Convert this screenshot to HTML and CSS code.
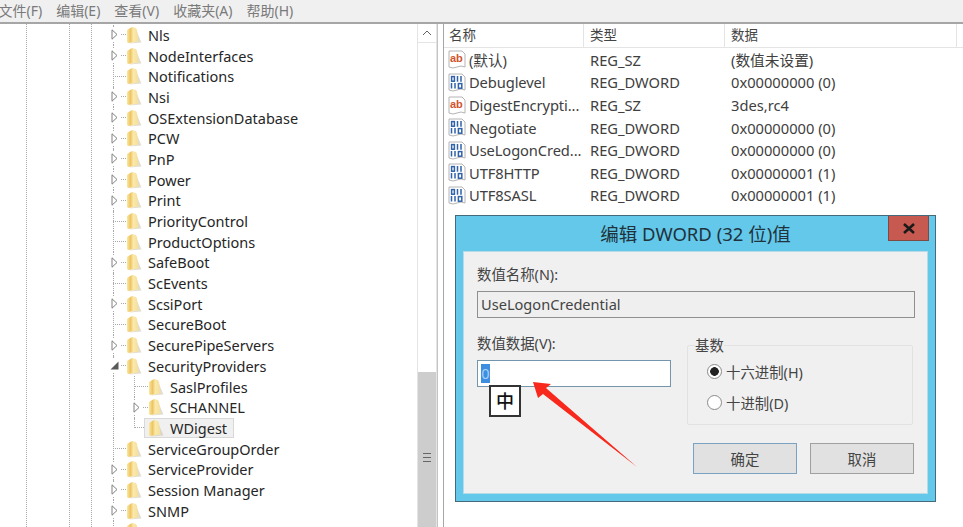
FILE: index.html
```html
<!DOCTYPE html>
<html lang="zh-CN">
<head>
    <meta charset="UTF-8">
    <title>注册表编辑器</title>
    <link rel="stylesheet" href="styles.css">
</head>
<body>
<svg class="defs" width="0" height="0">
    <defs>
        <linearGradient id="fold" x1="0" y1="0" x2="1" y2="0">
            <stop offset="0" stop-color="#fbe8a0"/>
            <stop offset="0.3" stop-color="#eec463"/>
            <stop offset="0.55" stop-color="#fae9ab"/>
            <stop offset="1" stop-color="#f5de9a"/>
        </linearGradient>
        <symbol id="folder" viewBox="0 0 16 18">
            <path d="M11 6 L15.5 16.5 L3 17.5 L11 15 Z" fill="#c9c2ac" opacity=".55"/>
            <path d="M1 4 L6 1 L10 2 L11 4 L12.5 15.5 L2 17 L1 16 Z" fill="url(#fold)"/>
        </symbol>
        <symbol id="closed" viewBox="0 0 7 11">
            <path d="M1 0.8 L6 5.5 L1 10.2 Z" fill="#fff" stroke="#808080"/>
        </symbol>
        <symbol id="opened" viewBox="0 0 9 9">
            <path d="M8.5 0.5 V8.5 H0.5 Z" fill="#5a5a5a"/>
        </symbol>
        <symbol id="page" viewBox="0 0 18 19">
            <path d="M1 1 H14 L17 4 V17 Q13 15 9 17 T1 17 Z" fill="#fff" stroke="#b4b4b4"/>
        </symbol>
        <symbol id="sz" viewBox="0 0 18 19">
            <use href="#page" width="18" height="19"/>
            <text x="2" y="12" class="ab-text">ab</text>
        </symbol>
        <symbol id="bin" viewBox="0 0 18 19">
            <use href="#page" width="18" height="19"/>
            <g fill="none" stroke="#2f62a8" stroke-width="1.5">
                <rect x="3.6" y="3.6" width="2.8" height="4.6"/>
                <path d="M9.5 3 V8.8 M13 3 V8.8 M3.5 10 V15.5 M7 10 V15.5"/>
                <rect x="10.4" y="10.6" width="3.4" height="4.6"/>
            </g>
        </symbol>
    </defs>
</svg>

<div class="menubar">
    <span>文件(F)</span>
    <span>编辑(E)</span>
    <span>查看(V)</span>
    <span>收藏夹(A)</span>
    <span>帮助(H)</span>
</div>

<div class="panes">
    <div class="treepane">
        <ul class="tree">
            <li class="row"><span class="twist"><svg><use href="#closed"/></svg></span><svg class="folder"><use href="#folder"/></svg><span class="name">Nls</span></li>
            <li class="row"><span class="twist"><svg><use href="#closed"/></svg></span><svg class="folder"><use href="#folder"/></svg><span class="name">NodeInterfaces</span></li>
            <li class="row"><span class="twist"></span><svg class="folder"><use href="#folder"/></svg><span class="name">Notifications</span></li>
            <li class="row"><span class="twist"><svg><use href="#closed"/></svg></span><svg class="folder"><use href="#folder"/></svg><span class="name">Nsi</span></li>
            <li class="row"><span class="twist"><svg><use href="#closed"/></svg></span><svg class="folder"><use href="#folder"/></svg><span class="name">OSExtensionDatabase</span></li>
            <li class="row"><span class="twist"><svg><use href="#closed"/></svg></span><svg class="folder"><use href="#folder"/></svg><span class="name">PCW</span></li>
            <li class="row"><span class="twist"><svg><use href="#closed"/></svg></span><svg class="folder"><use href="#folder"/></svg><span class="name">PnP</span></li>
            <li class="row"><span class="twist"><svg><use href="#closed"/></svg></span><svg class="folder"><use href="#folder"/></svg><span class="name">Power</span></li>
            <li class="row"><span class="twist"><svg><use href="#closed"/></svg></span><svg class="folder"><use href="#folder"/></svg><span class="name">Print</span></li>
            <li class="row"><span class="twist"></span><svg class="folder"><use href="#folder"/></svg><span class="name">PriorityControl</span></li>
            <li class="row"><span class="twist"></span><svg class="folder"><use href="#folder"/></svg><span class="name">ProductOptions</span></li>
            <li class="row"><span class="twist"><svg><use href="#closed"/></svg></span><svg class="folder"><use href="#folder"/></svg><span class="name">SafeBoot</span></li>
            <li class="row"><span class="twist"></span><svg class="folder"><use href="#folder"/></svg><span class="name">ScEvents</span></li>
            <li class="row"><span class="twist"><svg><use href="#closed"/></svg></span><svg class="folder"><use href="#folder"/></svg><span class="name">ScsiPort</span></li>
            <li class="row"><span class="twist"></span><svg class="folder"><use href="#folder"/></svg><span class="name">SecureBoot</span></li>
            <li class="row"><span class="twist"><svg><use href="#closed"/></svg></span><svg class="folder"><use href="#folder"/></svg><span class="name">SecurePipeServers</span></li>
            <li class="row"><span class="twist"><svg class="open"><use href="#opened"/></svg></span><svg class="folder"><use href="#folder"/></svg><span class="name">SecurityProviders</span></li>
            <li class="row sub"><span class="twist"></span><svg class="folder"><use href="#folder"/></svg><span class="name">SaslProfiles</span></li>
            <li class="row sub"><span class="twist"><svg><use href="#closed"/></svg></span><svg class="folder"><use href="#folder"/></svg><span class="name">SCHANNEL</span></li>
            <li class="row sub last"><span class="twist"></span><span class="picked"><svg class="folder"><use href="#folder"/></svg><span class="name">WDigest</span></span></li>
            <li class="row"><span class="twist"></span><svg class="folder"><use href="#folder"/></svg><span class="name">ServiceGroupOrder</span></li>
            <li class="row"><span class="twist"><svg><use href="#closed"/></svg></span><svg class="folder"><use href="#folder"/></svg><span class="name">ServiceProvider</span></li>
            <li class="row"><span class="twist"><svg><use href="#closed"/></svg></span><svg class="folder"><use href="#folder"/></svg><span class="name">Session Manager</span></li>
            <li class="row"><span class="twist"><svg><use href="#closed"/></svg></span><svg class="folder"><use href="#folder"/></svg><span class="name">SNMP</span></li>
            <li class="row"><span class="twist"></span><svg class="folder"><use href="#folder"/></svg></li>
        </ul>
        <div class="scrollbar">
            <div class="sb-up"><svg width="10" height="6" viewBox="0 0 10 6"><path d="M1 5 L5 1 L9 5" fill="none" stroke="#606060"/></svg></div>
            <div class="sb-track"></div>
            <div class="sb-thumb"><span class="grip"></span></div>
        </div>
    </div>

    <div class="listpane">
        <div class="cols head">
            <span>名称</span>
            <span>类型</span>
            <span>数据</span>
        </div>
        <div class="cols item"><span class="vname"><svg class="vicon"><use href="#sz"/></svg>(默认)</span><span>REG_SZ</span><span>(数值未设置)</span></div>
        <div class="cols item"><span class="vname"><svg class="vicon"><use href="#bin"/></svg>Debuglevel</span><span>REG_DWORD</span><span>0x00000000 (0)</span></div>
        <div class="cols item"><span class="vname"><svg class="vicon"><use href="#sz"/></svg>DigestEncrypti...</span><span>REG_SZ</span><span>3des,rc4</span></div>
        <div class="cols item"><span class="vname"><svg class="vicon"><use href="#bin"/></svg>Negotiate</span><span>REG_DWORD</span><span>0x00000000 (0)</span></div>
        <div class="cols item"><span class="vname"><svg class="vicon"><use href="#bin"/></svg>UseLogonCred...</span><span>REG_DWORD</span><span>0x00000000 (0)</span></div>
        <div class="cols item"><span class="vname"><svg class="vicon"><use href="#bin"/></svg>UTF8HTTP</span><span>REG_DWORD</span><span>0x00000001 (1)</span></div>
        <div class="cols item"><span class="vname"><svg class="vicon"><use href="#bin"/></svg>UTF8SASL</span><span>REG_DWORD</span><span>0x00000001 (1)</span></div>
    </div>
</div>

<div class="dialog">
    <div class="titlebar">
        <span class="title">编辑 DWORD (32 位)值</span>
        <span class="close"><svg width="14" height="11" viewBox="0 0 14 11"><path d="M2 1 L12 10 M12 1 L2 10" stroke="#1a1a1a" stroke-width="2.6"/></svg></span>
    </div>
    <div class="client">
        <label class="lbl">数值名称(N):</label>
        <div class="field readonly">UseLogonCredential</div>
        <div class="lower">
            <div class="data">
                <label class="lbl">数值数据(V):</label>
                <div class="field edit"><span class="sel">0</span></div>
            </div>
            <fieldset class="base">
                <legend>基数</legend>
                <div class="radio"><span class="dot on"></span>十六进制(H)</div>
                <div class="radio"><span class="dot"></span>十进制(D)</div>
            </fieldset>
        </div>
        <div class="buttons">
            <button class="btn primary">确定</button>
            <button class="btn">取消</button>
        </div>
    </div>
</div>

<div class="ime">中</div>

<svg class="arrow" width="110" height="90" viewBox="0 0 110 90">
    <polygon points="2,2 20,4 15,8 106,87 12,14 7,18" fill="#f8281c"/>
</svg>
</body>
</html>
```

FILE: styles.css
```css
* {
    margin: 0;
    padding: 0;
    box-sizing: border-box;
}
body {
    position: relative;
    width: 963px;
    height: 527px;
    overflow: hidden;
    background-color: #fff;
    color: #2e2e2e;
    font-family: "Noto Sans", "Noto Sans CJK SC", sans-serif;
    font-size: 14px;
}
.defs {
    position: absolute;
}
.ab-text {
    font-family: "Liberation Sans", sans-serif;
    font-size: 11px;
    font-weight: bold;
    fill: #d2532e;
}

/* menu */
.menubar {
    display: flex;
    gap: 14px;
    height: 24px;
    padding-bottom: 3px;
    align-items: center;
    background-color: #f0f0f0;
    border-bottom: 2px solid #a6a6a6;
    color: #7a7a7a;
    font-size: 14px;
}
.menubar span:first-child {
    margin-left: -1.5px;
}

.panes {
    display: flex;
    height: 503px;
}

/* left tree */
.treepane {
    display: flex;
    width: 438px;
    flex: none;
    border-right: 1px solid #c4c4c4;
    overflow: hidden;
}
.tree {
    flex: 1;
    padding-top: 0.5px;
    list-style: none;
    background-image:
        repeating-linear-gradient(to bottom, #a8a8a8 0, #a8a8a8 1px, transparent 1px, transparent 2px),
        repeating-linear-gradient(to bottom, #a8a8a8 0, #a8a8a8 1px, transparent 1px, transparent 2px),
        repeating-linear-gradient(to bottom, #a8a8a8 0, #a8a8a8 1px, transparent 1px, transparent 2px);
    background-size: 1px 100%;
    background-position: 26px 0, 69px 0, 91px 0;
    background-repeat: no-repeat;
}
.row {
    position: relative;
    display: flex;
    align-items: center;
    height: 20.7px;
    padding-left: 108px;
    color: #262626;
    font-size: 14.5px;
    white-space: nowrap;
}
.row::before {
    content: "";
    position: absolute;
    left: 113px;
    top: 0;
    bottom: 0;
    border-left: 1px dotted #a8a8a8;
}
.twist {
    position: relative;
    z-index: 1;
    display: flex;
    align-items: center;
    width: 18px;
    height: 100%;
    flex: none;
    background: repeating-linear-gradient(to right, #a8a8a8 0, #a8a8a8 1px, transparent 1px, transparent 2px) 5px center / 13px 1px no-repeat;
}
.twist svg {
    width: 7px;
    height: 11px;
    margin-left: 3px;
    box-shadow: 0 0 0 2px #fff;
    background-color: #fff;
}
.twist svg.open {
    width: 9px;
    height: 9px;
    margin-left: 2px;
}
.folder {
    width: 16px;
    height: 18px;
    flex: none;
}
.name {
    margin-left: 6px;
}
.sub {
    padding-left: 130px;
}
.sub::after {
    content: "";
    position: absolute;
    left: 134px;
    top: 0;
    bottom: 0;
    border-left: 1px dotted #a8a8a8;
}
.sub.last::after {
    bottom: 50%;
}
.picked {
    position: relative;
    z-index: 1;
    display: flex;
    align-items: center;
    height: 20px;
    margin-left: -4px;
    padding: 0 6px 0 3px;
    background-color: #f0f0f0;
    border: 1px solid #d9d9d9;
}

/* scrollbar */
.scrollbar {
    position: relative;
    width: 20px;
    flex: none;
    border-left: 1px solid #e4e4e4;
    border-right: 1px solid #e4e4e4;
    display: flex;
    flex-direction: column;
}
.sb-up {
    display: flex;
    align-items: center;
    justify-content: center;
    height: 19px;
    border-bottom: 1px solid #e4e4e4;
}
.sb-track {
    height: 329px;
}
.sb-thumb {
    flex: 1;
    background-color: #cdcdcd;
}
.grip {
    display: block;
    width: 8px;
    height: 9px;
    margin: 81px auto 0;
    border-top: 1px solid #666;
    border-bottom: 1px solid #666;
    background: linear-gradient(#666, #666) center / 100% 1px no-repeat;
}

/* right list */
.listpane {
    flex: 1;
    margin-left: 5px;
    border-left: 1px solid #a6a6a6;
    overflow: hidden;
}
.cols {
    display: grid;
    grid-template-columns: 141px 141px 1fr;
    align-items: center;
    white-space: nowrap;
}
.head {
    height: 24px;
    margin-bottom: 0.6px;
    border-bottom: 1px solid #e4e4e4;
    padding-left: 5px;
    color: #444;
    font-size: 13.5px;
}
.head span {
    height: 100%;
    line-height: 22px;
    border-right: 1px solid #e4e4e4;
    margin-right: 6px;
}
.item {
    height: 22.6px;
    padding-left: 4px;
    color: #404040;
    font-size: 14.7px;
}
.item > span + span {
    margin-left: 1px;
}
.vname {
    display: flex;
    align-items: center;
    gap: 3px;
    letter-spacing: -0.1px;
}
.vicon {
    width: 18px;
    height: 19px;
    flex: none;
}

/* dialog */
.dialog {
    position: absolute;
    left: 455px;
    top: 215px;
    width: 481px;
    height: 287px;
    display: flex;
    flex-direction: column;
    padding: 0 7px 7px;
    background-color: #63c8ea;
    border: 1px solid #456a7c;
}
.titlebar {
    position: relative;
    height: 35px;
    flex: none;
    text-align: center;
    line-height: 35px;
    color: #20323c;
    font-size: 18.5px;
}
.close {
    position: absolute;
    top: 0;
    right: -1px;
    display: flex;
    align-items: center;
    justify-content: center;
    width: 41px;
    height: 25px;
    background-color: #c75a50;
    border: 1px solid #7d4a44;
    border-top: 0;
}
.client {
    flex: 1;
    display: flex;
    flex-direction: column;
    padding: 13px 13px 0;
    background-color: #f0f0f0;
    border: 1px solid #b6dbe8;
}
.lbl {
    display: block;
    height: 20px;
    line-height: 20px;
    color: #444;
    font-size: 14.4px;
}
.field {
    margin-top: 6px;
    height: 27px;
    line-height: 25px;
    padding-left: 3px;
    color: #444;
    font-size: 14.6px;
}
.readonly {
    width: 438px;
    background-color: #efefef;
    border: 1px solid #8f8f8f;
}
.lower {
    display: flex;
    gap: 16px;
    margin-top: 16px;
}
.data {
    width: 194px;
    flex: none;
}
.edit {
    background-color: #fff;
    border: 1px solid #7496ad;
}
.sel {
    display: inline-block;
    height: 19px;
    width: 9px;
    line-height: 19px;
    background-color: #3d8ee0;
    color: #a8d0f5;
    text-align: center;
}
.base {
    width: 226px;
    height: 86px;
    margin-top: 5px;
    padding: 4px 0 0 19px;
    border: 1px solid #e2e2e2;
    border-radius: 2px;
}
.base legend {
    margin-left: -12px;
    color: #444;
    font-size: 14.4px;
    line-height: 13px;
}
.radio {
    display: flex;
    align-items: center;
    gap: 4px;
    height: 31px;
    color: #444;
    font-size: 14.4px;
}
.dot {
    width: 15px;
    height: 15px;
    background-color: #fff;
    border: 1px solid #8a8a8a;
    border-radius: 50%;
}
.dot.on {
    background: radial-gradient(circle, #222 0, #222 4px, #fff 4.6px);
}
.buttons {
    display: flex;
    gap: 13px;
    margin-top: 18px;
    padding-left: 216px;
}
.btn {
    width: 104px;
    height: 31px;
    background-color: #e1e1e1;
    border: 1px solid #a0a0a0;
    color: #444;
    font-family: inherit;
    font-size: 14.4px;
}
.primary {
    border-color: #7ba2c0;
}

/* overlays */
.ime {
    position: absolute;
    left: 489px;
    top: 385px;
    width: 32px;
    height: 32px;
    border: 2px solid #333;
    background-color: #fff;
    color: #111;
    font-size: 18px;
    font-weight: 500;
    line-height: 28px;
    text-align: center;
}
.arrow {
    position: absolute;
    left: 531px;
    top: 380px;
}
```
